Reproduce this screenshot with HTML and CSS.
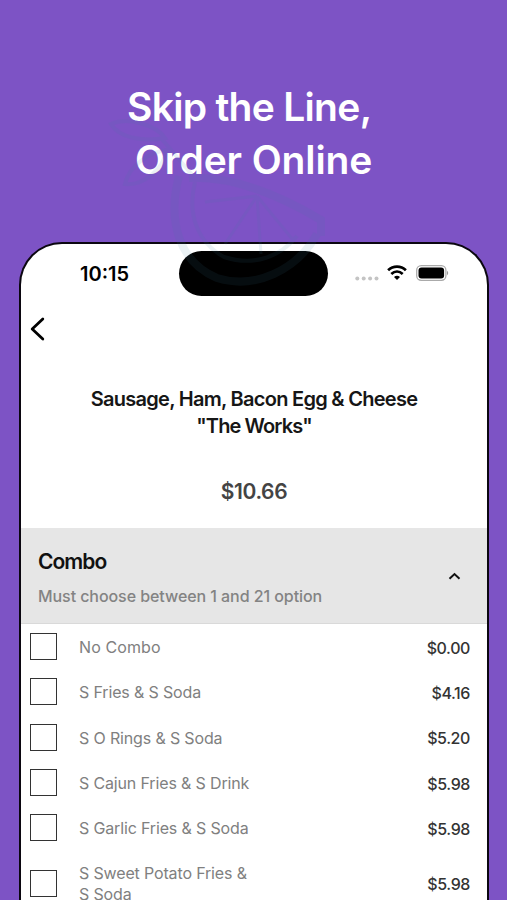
FILE: index.html
```html
<!DOCTYPE html>
<html lang="en">
  <head>
    <meta charset="UTF-8" />
    <meta name="viewport" content="width=device-width, initial-scale=1.0" />
    <title>Order Online</title>
    <link rel="stylesheet" href="styles.css">
  </head>
  <body>
    <h1 class="headline">
      <span class="line first">Skip the Line,</span>
      <span class="line second">Order Online</span>
    </h1>

    <div class="phone">
      <div class="status">
        <div class="time">10:15</div>
        <div class="island"></div>
        <div class="indicators">
          <svg class="dots" width="24" height="5" viewBox="0 0 24 5" fill="#c4c4c4">
            <circle cx="2.3" cy="2.5" r="2" />
            <circle cx="8.7" cy="2.5" r="2" />
            <circle cx="15.1" cy="2.5" r="2" />
            <circle cx="21.5" cy="2.5" r="2" />
          </svg>
          <svg class="wifi" width="20" height="15" viewBox="0 0 20 15" fill="none" stroke="#000" stroke-width="2.7">
            <path d="M1.1 5.3C6.2.4 13.8.4 18.9 5.3" />
            <path d="M4.3 8.9c3.4-3.1 8-3.1 11.4 0" />
            <path d="M7 11.9c1.8-1.7 4.2-1.7 6 0L10 14.9z" fill="#000" stroke="none" />
          </svg>
          <svg class="battery" width="33" height="16" viewBox="0 0 33 16">
            <rect x=".7" y=".7" width="29.2" height="14.6" rx="4.5" fill="#fff" stroke="#aaa" stroke-width="1.3" />
            <rect x="2.5" y="2.5" width="25.6" height="11" rx="3" fill="#000" />
            <path d="M31 5.8c1.6.7 1.6 3.7 0 4.4z" fill="#999" />
          </svg>
        </div>
      </div>

      <div class="nav">
        <svg width="16" height="24" viewBox="0 0 16 24" fill="none" stroke="#000" stroke-width="2.8" stroke-linecap="round" stroke-linejoin="round">
          <path d="M12.8 2L2.2 12l10.6 10" />
        </svg>
      </div>

      <div class="item">
        <div class="name"><span class="name1">Sausage, Ham, Bacon Egg &amp; Cheese</span><br><span class="name2">"The Works"</span></div>
        <div class="total">$10.66</div>
      </div>

      <div class="group">
        <div>
          <div class="groupTitle">Combo</div>
          <div class="groupHint">Must choose between 1 and 21 option</div>
        </div>
        <svg width="13" height="8" viewBox="0 0 13 8" fill="none" stroke="#111" stroke-width="2">
          <path d="M1.5 6.7l5-4.7 5 4.7" />
        </svg>
      </div>

      <div class="options">
        <div class="option">
          <div class="box"></div>
          <div class="label short">No Combo</div>
          <div class="price">$0.00</div>
        </div>
        <div class="option">
          <div class="box"></div>
          <div class="label">S Fries &amp; S Soda</div>
          <div class="price">$4.16</div>
        </div>
        <div class="option">
          <div class="box"></div>
          <div class="label">S O Rings &amp; S Soda</div>
          <div class="price">$5.20</div>
        </div>
        <div class="option">
          <div class="box"></div>
          <div class="label">S Cajun Fries &amp; S Drink</div>
          <div class="price">$5.98</div>
        </div>
        <div class="option">
          <div class="box"></div>
          <div class="label">S Garlic Fries &amp; S Soda</div>
          <div class="price">$5.98</div>
        </div>
        <div class="option tall">
          <div class="box"></div>
          <div class="label">S Sweet Potato Fries &amp;<br>S Soda</div>
          <div class="price">$5.98</div>
        </div>
      </div>
    </div>

    <!-- faint fruit slice over the top of the page -->
    <svg class="fruit" width="230" height="180" viewBox="0 0 230 180" fill="none" stroke="#3f7fa0" stroke-width="6">
      <path d="M74 60C62 105 74 146 112 162C150 174 192 154 212 118" stroke-width="8" />
      <path d="M90 66C82 98 92 126 119 141C150 151 176 140 192 120" stroke-width="4" />
      <path d="M84 62C130 60 176 80 216 104V120" stroke-width="8" />
      <path d="M152 80L100 86M152 80L120 128M152 80L156 138M152 80L188 124" stroke-width="3" />
      <path d="M6 8C24 0 52 10 60 22C38 26 14 22 6 8zM20 68C24 50 44 36 62 34C58 54 38 70 20 68zM56 22L88 60" stroke-width="4" />
    </svg>
  </body>
</html>
```

FILE: styles.css
```css
* {
  box-sizing: border-box;
}
body {
  margin: 0;
  height: 900px;
  overflow: hidden;
  position: relative;
  background-color: #7d53c5;
  font-family: Inter, "Liberation Sans", sans-serif;
  display: flex;
  flex-direction: column;
}
.headline {
  margin: 0;
  height: 242px;
  padding-top: 80px;
  color: white;
  font-size: 39px;
  line-height: 53px;
  font-weight: 600;
  flex: none;
}
.line {
  display: block;
  white-space: nowrap;
}
.first {
  padding-left: 127px;
  letter-spacing: -0.7px;
}
.second {
  padding-left: 135px;
  letter-spacing: -0.1px;
}
.phone {
  flex: 1;
  min-height: 0;
  margin: 0 18px 0 19px;
  border: 2px solid #0b0710;
  border-bottom: none;
  border-radius: 43px 43px 0 0;
  background-color: white;
  overflow: hidden;
}
.status {
  height: 60px;
  padding-top: 7px;
  display: flex;
  align-items: flex-start;
}
.time {
  width: 158px;
  padding-left: 59px;
  font-size: 20px;
  line-height: 47px;
  font-weight: 600;
}
.island {
  width: 149px;
  height: 45px;
  border-radius: 23px;
  background-color: black;
}
.indicators {
  height: 45px;
  padding-left: 27px;
  display: flex;
  align-items: center;
}
.dots {
  margin-top: 9px;
}
.wifi {
  margin-left: 8px;
  margin-top: -2px;
}
.battery {
  margin-left: 9px;
  margin-top: -2px;
}
.nav {
  height: 82px;
  padding: 13px 0 0 9px;
}
.item {
  height: 142px;
  text-align: center;
}
.name {
  font-size: 20px;
  line-height: 27px;
  font-weight: 600;
  color: #161616;
  white-space: nowrap;
}
.name1 {
  letter-spacing: -0.72px;
}
.name2 {
  letter-spacing: -0.9px;
}
.total {
  margin-top: 38px;
  font-size: 21px;
  line-height: 28px;
  font-weight: 600;
  color: #444;
  letter-spacing: -0.4px;
}
.group {
  height: 96px;
  padding: 19px 26px 0 17px;
  background-color: #e6e6e6;
  border-bottom: 1px solid #d9d9d9;
  display: flex;
  justify-content: space-between;
}
.group svg {
  margin-top: 25px;
}
.groupTitle {
  font-size: 21px;
  line-height: 30px;
  font-weight: 600;
  color: #111;
  letter-spacing: -0.95px;
}
.groupHint {
  margin-top: 7px;
  font-size: 16px;
  line-height: 24px;
  font-weight: 500;
  color: #838383;
  letter-spacing: -0.07px;
}
.options {
  padding-top: 1px;
}
.option {
  height: 45.3px;
  padding: 0 17px 0 9px;
  display: flex;
  align-items: center;
}
.tall {
  height: 66px;
}
.box {
  width: 27px;
  height: 27px;
  border: 1.5px solid #333;
  position: relative;
  top: -1px;
}
.label {
  margin-left: 22px;
  flex: 1;
  font-size: 16px;
  line-height: 21px;
  color: #808080;
  letter-spacing: -0.15px;
}
.short {
  letter-spacing: 0.1px;
}
.price {
  font-size: 16px;
  font-weight: 500;
  color: #333;
  letter-spacing: -0.4px;
}
.fruit {
  position: absolute;
  left: 105px;
  top: 116px;
  opacity: 0.1;
  pointer-events: none;
}
```
